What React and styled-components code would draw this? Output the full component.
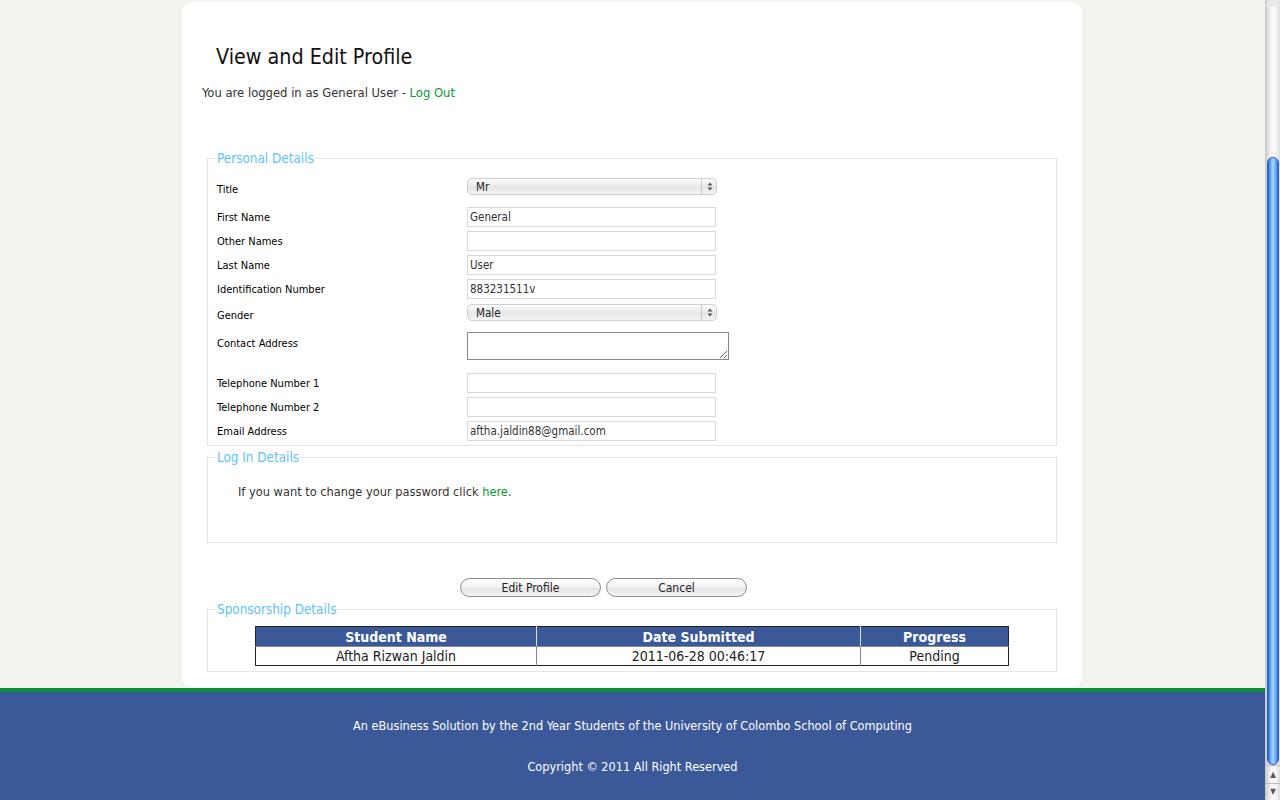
import React from "react";
import styled, { createGlobalStyle } from "styled-components";

const FONT = `"DejaVu Sans Condensed", "Liberation Sans", sans-serif`;

const GlobalStyle = createGlobalStyle`
  html, body { margin: 0; padding: 0; height: 100%; overflow: hidden; }
  body {
    background: #f4f4ee;
    font-family: ${FONT};
    color: #333;
  }
  * { box-sizing: border-box; }
`;

const Shell = styled.div`
  display: flex;
  height: 800px;
  width: 1280px;
`;

const Page = styled.div`
  flex: 1;
  display: flex;
  flex-direction: column;
`;

const Main = styled.main`
  height: 688px;
  padding: 2px 1px 0 0;
  display: flex;
  justify-content: center;
`;

const Card = styled.div`
  width: 900px;
  height: 685px;
  background: #fff;
  border-radius: 10px;
  padding: 40px 25px 0 25px;
`;

const Heading = styled.h1`
  margin: 0 0 0 9px;
  font-size: 21.3px;
  font-weight: normal;
  color: #111;
  line-height: 30px;
`;

const LoginLine = styled.p`
  margin: 11px 0 0 -5px;
  font-size: 12.9px;
  line-height: 20px;
  color: #333;
`;

const Link = styled.a`
  color: #0a9a32;
  text-decoration: none;
`;

const Fieldset = styled.fieldset`
  margin: ${(p) => p.$mt || 0}px 0 0 0;
  padding: ${(p) => p.$pad || "0 9px"};
  border: 1px solid #e6e6e6;
  min-height: ${(p) => p.$h || 0}px;
`;

const Legend = styled.legend`
  padding: 0;
  font-size: 13.4px;
  line-height: 17px;
  color: #5ec3f7;
`;

const FormGrid = styled.div`
  display: grid;
  grid-template-columns: 250px 1fr;
  row-gap: 4px;
  align-items: center;
`;

const Label = styled.label`
  font-size: 11px;
  color: #000;
  align-self: ${(p) => (p.$top ? "start" : "center")};
  padding-top: ${(p) => (p.$top ? "6px" : "0")};
`;

const Cell = styled.div`
  height: ${(p) => p.$h}px;
  padding-top: ${(p) => p.$pt || 0}px;
  display: flex;
  align-items: flex-start;
`;

const TextInput = styled.input`
  width: 249px;
  height: 20px;
  border: 1px solid #d9d9d9;
  padding: 0 2px;
  font-family: ${FONT};
  font-size: 11.5px;
  color: #333;
  outline: none;
`;

const SelectBox = styled.div`
  position: relative;
  width: 250px;
  height: 17px;
`;

const Select = styled.select`
  display: block;
  appearance: none;
  -webkit-appearance: none;
  width: 100%;
  height: 17px;
  border: 1px solid #cfcfcf;
  border-radius: 5px;
  background: linear-gradient(#fdfdfd, #e6e6e6 55%, #f3f3f3);
  box-shadow: inset 0 1px 0 #fff, 0 0 1px rgba(0,0,0,0.15);
  padding: 0 0 0 8px;
  font-family: ${FONT};
  font-size: 11.5px;
  color: #222;
  outline: none;
`;

const Arrows = styled.span`
  position: absolute;
  right: 0;
  top: 1px;
  width: 16px;
  height: 15px;
  border-left: 1px solid #c8c8c8;
  display: flex;
  align-items: center;
  justify-content: center;
  pointer-events: none;
`;

const TextArea = styled.textarea`
  width: 262px;
  height: 28px;
  border: 1px solid #8a8a8a;
  resize: both;
  font-family: ${FONT};
  font-size: 11px;
  outline: none;
`;

const InfoText = styled.p`
  margin: 16px 0 0 21px;
  font-size: 12.7px;
  line-height: 20px;
  color: #333;
`;

const ButtonRow = styled.div`
  display: flex;
  gap: 5px;
  padding-left: 253px;
  margin-top: 35px;
`;

const Button = styled.button`
  width: 141px;
  height: 19px;
  border: 1px solid #8c8c8c;
  border-radius: 10px;
  background: linear-gradient(#ffffff, #f1f1f1 50%, #e4e4e4 51%, #f4f4f4);
  font-family: ${FONT};
  font-size: 12px;
  color: #222;
  padding: 0;
`;

const Table = styled.table`
  width: 754px;
  margin: 0 auto 5px;
  border-collapse: collapse;
  border: 1px solid #222;
  font-size: 14px;
`;

const Th = styled.th`
  background: #3b5998;
  color: #fff;
  height: 20px;
  padding: 0;
  font-weight: bold;
  border-left: 1px solid #e0e0e0;
  border-bottom: 1px solid #888;
  &:first-child { border-left: none; }
`;

const Td = styled.td`
  height: 19px;
  padding: 0;
  text-align: center;
  color: #222;
  border-left: 1px solid #888;
  &:first-child { border-left: none; }
`;

const Footer = styled.footer`
  height: 112px;
  border-top: 4px solid #0b8f34;
  background: #3b5998;
  color: #fff;
  font-size: 12.6px;
  text-align: center;
  padding-top: 26px;
`;

const FooterLine = styled.p`
  margin: 0 0 ${(p) => p.$mb || 0}px;
  line-height: 16px;
`;

const Scrollbar = styled.div`
  width: 15px;
  height: 800px;
  display: flex;
  flex-direction: column;
  background: linear-gradient(90deg, #cfcfcf, #f4f4f4 35%, #fbfbfb 60%, #dedede);
  border-left: 1px solid #c9c9c9;
`;

const Track = styled.div`
  height: 157px;
  border-top: 6px solid #e8e8e8;
  border-radius: 7px 7px 0 0;
`;

const Thumb = styled.div`
  height: 608px;
  margin: 0 1px;
  border-radius: 7px;
  background: linear-gradient(90deg, #1f5fcf, #7ab8f5 30%, #a9d4fb 50%, #6fb0f2 75%, #2a6fd6);
  border: 1px solid #2a5fbf;
`;

const ArrowBtn = styled.div`
  height: 17.5px;
  display: flex;
  align-items: center;
  justify-content: center;
  border-top: 1px solid #bdbdbd;
  font-size: 8px;
  color: #555;
`;

function ArrowGlyph() {
  return (
    <svg width="6" height="9" viewBox="0 0 6 9">
      <path d="M3 0.5 L5.5 3.5 L0.5 3.5 Z" fill="#555" />
      <path d="M3 8.5 L5.5 5.5 L0.5 5.5 Z" fill="#555" />
    </svg>
  );
}

function SelectField({ value }) {
  return (
    <SelectBox>
      <Select defaultValue={value}>
        <option>{value}</option>
      </Select>
      <Arrows>
        <ArrowGlyph />
      </Arrows>
    </SelectBox>
  );
}

const rows = [
  { label: "Title", type: "select", value: "Mr", h: 28, pt: 3 },
  { label: "First Name", type: "text", value: "General", h: 20 },
  { label: "Other Names", type: "text", value: "", h: 20 },
  { label: "Last Name", type: "text", value: "User", h: 20 },
  { label: "Identification Number", type: "text", value: "883231511v", h: 20 },
  { label: "Gender", type: "select", value: "Male", h: 24, pt: 1 },
  { label: "Contact Address", type: "area", h: 38, pt: 1 },
  { label: "Telephone Number 1", type: "text", value: "", h: 20 },
  { label: "Telephone Number 2", type: "text", value: "", h: 20 },
  { label: "Email Address", type: "text", value: "aftha.jaldin88@gmail.com", h: 20 },
];

export default function App() {
  return (
    <>
      <GlobalStyle />
      <Shell>
        <Page>
          <Main>
            <Card>
              <Heading>View and Edit Profile</Heading>
              <LoginLine>
                You are logged in as General User - <Link href="#">Log Out</Link>
              </LoginLine>

              <Fieldset $mt={47} $pad="8px 9px 4px 9px">
                <Legend>Personal Details</Legend>
                <FormGrid>
                  {rows.map((r) => (
                    <React.Fragment key={r.label}>
                      <Label $top={r.type === "area"}>{r.label}</Label>
                      <Cell $h={r.h} $pt={r.pt}>
                        {r.type === "text" && <TextInput defaultValue={r.value} />}
                        {r.type === "select" && <SelectField value={r.value} />}
                        {r.type === "area" && <TextArea />}
                      </Cell>
                    </React.Fragment>
                  ))}
                </FormGrid>
              </Fieldset>

              <Fieldset $mt={3} $h={94}>
                <Legend>Log In Details</Legend>
                <InfoText>
                  If you want to change your password click <Link href="#">here</Link>.
                </InfoText>
              </Fieldset>

              <ButtonRow>
                <Button>Edit Profile</Button>
                <Button>Cancel</Button>
              </ButtonRow>

              <Fieldset $mt={4} $pad="8px 9px 0 9px">
                <Legend>Sponsorship Details</Legend>
                <Table>
                  <thead>
                    <tr>
                      <Th style={{ width: 281 }}>Student Name</Th>
                      <Th style={{ width: 324 }}>Date Submitted</Th>
                      <Th>Progress</Th>
                    </tr>
                  </thead>
                  <tbody>
                    <tr>
                      <Td>Aftha Rizwan Jaldin</Td>
                      <Td>2011-06-28 00:46:17</Td>
                      <Td>Pending</Td>
                    </tr>
                  </tbody>
                </Table>
              </Fieldset>
            </Card>
          </Main>
          <Footer>
            <FooterLine $mb={25}>
              An eBusiness Solution by the 2nd Year Students of the University of Colombo School of Computing
            </FooterLine>
            <FooterLine>Copyright © 2011 All Right Reserved</FooterLine>
          </Footer>
        </Page>
        <Scrollbar>
          <Track />
          <Thumb />
          <ArrowBtn>▲</ArrowBtn>
          <ArrowBtn>▼</ArrowBtn>
        </Scrollbar>
      </Shell>
    </>
  );
}
